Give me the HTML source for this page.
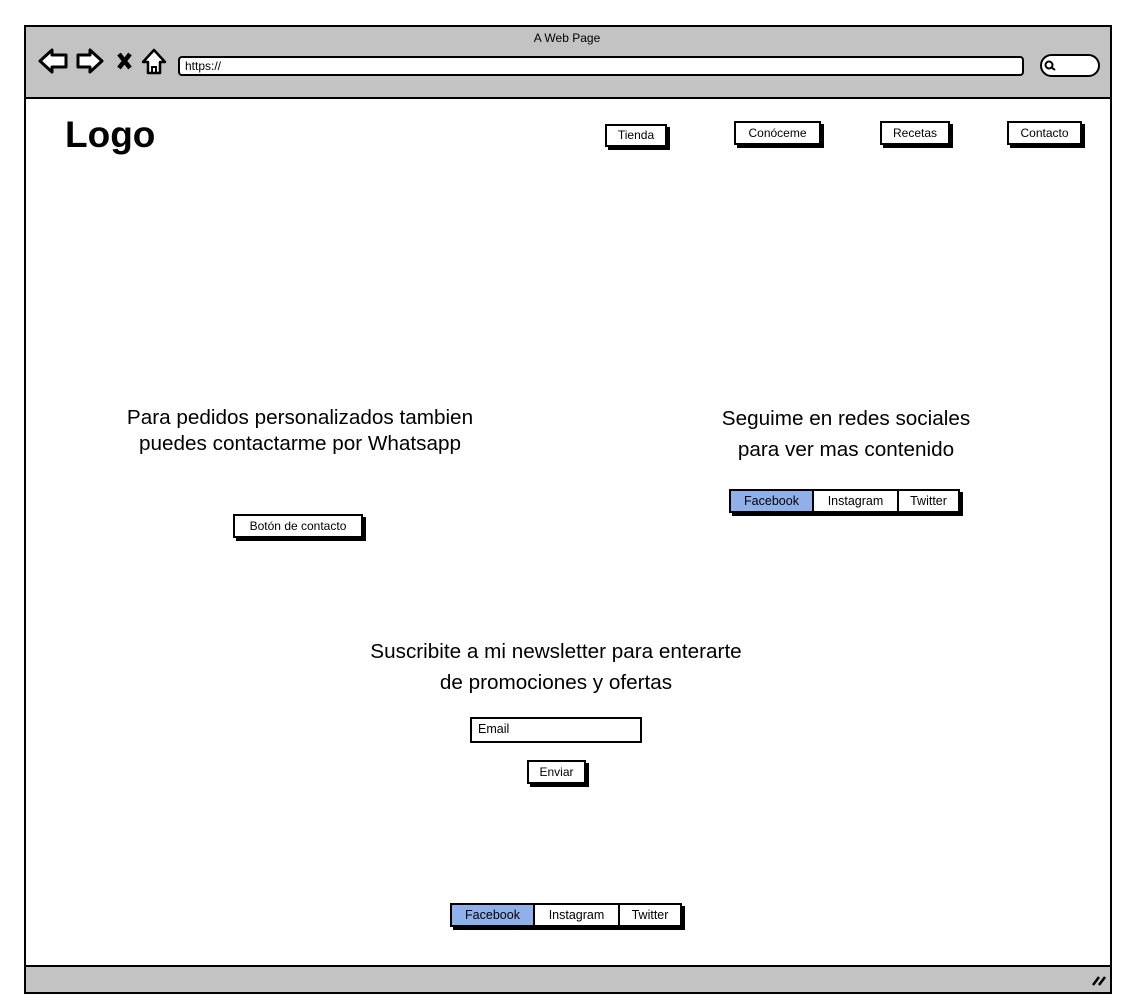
<!DOCTYPE html>
<html><head><meta charset="utf-8"><style>
*{margin:0;padding:0;box-sizing:border-box}
body{width:1134px;height:1002px;background:#fff;position:relative;overflow:hidden;font-family:"Liberation Sans",sans-serif;color:#000}
.a{position:absolute}
.btn{position:absolute;background:#fff;border:2px solid #000;box-shadow:3px 3px 0 #000;font-size:12px;text-align:center}
.t{position:absolute;font-size:20.7px;text-align:center;line-height:31px;white-space:nowrap}
.seg{position:absolute;display:flex;border:2px solid #000;box-shadow:3px 3px 0 #000;height:24px;font-size:12.5px}
.seg div{border-right:2px solid #000;text-align:center;line-height:20px;background:#fff}
.seg div:last-child{border-right:none}
.seg .on{background:#8fb0e8}
</style></head><body>
<div class="a" style="left:24px;top:25px;width:1088px;height:969px;border:2px solid #000"></div>
<div class="a" style="left:26px;top:27px;width:1084px;height:72px;background:#c3c3c3;border-bottom:2px solid #000"></div>
<div class="a" style="left:0;top:31px;width:1134px;text-align:center;font-size:12px">A Web Page</div>
<svg class="a" style="left:36px;top:44px" width="140" height="34" viewBox="0 0 140 34">
<path d="M4 17 L16 6 L16 11 L30 11 L30 23 L16 23 L16 28 Z" fill="#fff" stroke="#000" stroke-width="3" stroke-linejoin="round"/>
<path d="M66 17 L54 6 L54 11 L42 11 L42 23 L54 23 L54 28 Z" fill="#fff" stroke="#000" stroke-width="3" stroke-linejoin="round"/>
<path d="M83 10 L94 24 M94 10 L83 24" stroke="#000" stroke-width="4.5"/>
<path d="M118 6 L107 18 L112 18 L112 29 L124 29 L124 18 L129 18 Z" fill="#fff" stroke="#000" stroke-width="2.5" stroke-linejoin="round"/>
<path d="M116 29 L116 23 L120 23 L120 29" fill="none" stroke="#000" stroke-width="2"/>
</svg>
<div class="a" style="left:178px;top:56px;width:846px;height:20px;background:#fff;border:2.5px solid #000;border-radius:4px;font-size:12px;padding-left:5px;line-height:16px">https://</div>
<div class="a" style="left:1040px;top:54px;width:60px;height:23px;background:#fff;border:2.5px solid #000;border-radius:12px"></div>
<svg class="a" style="left:1043px;top:59px" width="14" height="14"><circle cx="6" cy="6" r="3.5" fill="none" stroke="#000" stroke-width="2"/><path d="M8 8 L12 11" stroke="#000" stroke-width="2"/></svg>
<div class="a" style="left:65px;top:114px;font-size:37px;font-weight:bold">Logo</div>
<div class="btn" style="left:605px;top:124px;width:62px;height:23px;line-height:19px">Tienda</div>
<div class="btn" style="left:734px;top:121px;width:87px;height:24px;line-height:20px">Conóceme</div>
<div class="btn" style="left:880px;top:121px;width:70px;height:24px;line-height:20px">Recetas</div>
<div class="btn" style="left:1007px;top:121px;width:75px;height:24px;line-height:20px">Contacto</div>
<div class="t" style="left:100px;top:405px;width:400px;line-height:26px">Para pedidos personalizados tambien<br>puedes contactarme por Whatsapp</div>
<div class="btn" style="left:233px;top:514px;width:130px;height:24px;line-height:20px">Botón de contacto</div>
<div class="t" style="left:666px;top:403px;width:360px">Seguime en redes sociales<br>para ver mas contenido</div>
<div class="seg" style="left:729px;top:489px;width:231px"><div class="on" style="width:83px">Facebook</div><div style="width:85px">Instagram</div><div style="flex:1">Twitter</div></div>
<div class="t" style="left:331px;top:636px;width:450px">Suscribite a mi newsletter para enterarte<br>de promociones y ofertas</div>
<div class="a" style="left:470px;top:717px;width:172px;height:26px;border:2.5px solid #000;font-size:12.5px;line-height:21px;padding-left:6px">Email</div>
<div class="btn" style="left:527px;top:760px;width:59px;height:24px;line-height:20px">Enviar</div>
<div class="seg" style="left:450px;top:903px;width:232px"><div class="on" style="width:83px">Facebook</div><div style="width:85px">Instagram</div><div style="flex:1">Twitter</div></div>
<div class="a" style="left:26px;top:965px;width:1084px;height:27px;background:#c3c3c3;border-top:2px solid #000"></div>
<svg class="a" style="left:1090px;top:972px" width="18" height="16"><path d="M3 13 L9 5 M9 13 L15 5" stroke="#000" stroke-width="2.5"/></svg>
</body></html>
